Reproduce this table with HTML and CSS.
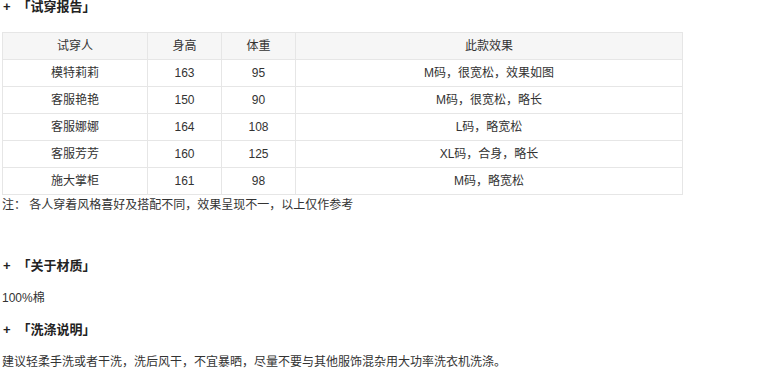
FILE: index.html
```html
<!DOCTYPE html>
<html lang="zh-CN">
<head>
<meta charset="utf-8">
<link rel="stylesheet" href="styles.css">
</head>
<body>
<div class="page">
  <h3 class="sec sec-first"><span class="plus">+</span>「试穿报告」</h3>
  <table class="fit">
    <colgroup>
      <col class="c1"><col class="c2"><col class="c3"><col class="c4">
    </colgroup>
    <thead>
      <tr><th>试穿人</th><th>身高</th><th>体重</th><th>此款效果</th></tr>
    </thead>
    <tbody>
      <tr><td>模特莉莉</td><td>163</td><td>95</td><td>M码，很宽松，效果如图</td></tr>
      <tr><td>客服艳艳</td><td>150</td><td>90</td><td>M码，很宽松，略长</td></tr>
      <tr><td>客服娜娜</td><td>164</td><td>108</td><td>L码，略宽松</td></tr>
      <tr><td>客服芳芳</td><td>160</td><td>125</td><td>XL码，合身，略长</td></tr>
      <tr><td>施大掌柜</td><td>161</td><td>98</td><td>M码，略宽松</td></tr>
    </tbody>
  </table>
  <p class="note">注： 各人穿着风格喜好及搭配不同，效果呈现不一，以上仅作参考</p>
  <h3 class="sec sec-gap"><span class="plus">+</span>「关于材质」</h3>
  <p class="txt">100%棉</p>
  <h3 class="sec"><span class="plus">+</span>「洗涤说明」</h3>
  <p class="txt">建议轻柔手洗或者干洗，洗后风干，不宜暴晒，尽量不要与其他服饰混杂用大功率洗衣机洗涤。</p>
</div>
</body>
</html>
```
FILE: styles.css
```css
html, body {
  margin: 0;
  padding: 0;
  background: #fff;
}
body {
  font-family: "Liberation Sans", "Noto Sans CJK SC", sans-serif;
  font-size: 12px;
  color: #333;
}
.page {
  padding: 0 2px;
}
.sec {
  margin: 12px 0 0;
  font-size: 13px;
  font-weight: bold;
  line-height: 20px;
  color: #222;
}
.plus {
  display: inline-block;
  margin: 0 7px 0 1px;
}
.sec-first {
  margin: 0 0 18px;
  line-height: 14px;
}
.sec-gap {
  margin-top: 41px;
}
.txt {
  margin: 12px 0 0;
  line-height: 20px;
}
.fit {
  width: 680px;
  border-collapse: collapse;
  table-layout: fixed;
}
.fit .c1 { width: 145px; }
.fit .c2 { width: 74px; }
.fit .c3 { width: 74px; }
.fit .c4 { width: 387px; }
.fit th, .fit td {
  height: 26px;
  padding: 0;
  border: 1px solid #e6e6e6;
  text-align: center;
  font-weight: normal;
  vertical-align: middle;
  line-height: 16px;
}
.fit th {
  background: #f6f6f6;
}
.note {
  margin: 0;
  line-height: 20px;
}
```
